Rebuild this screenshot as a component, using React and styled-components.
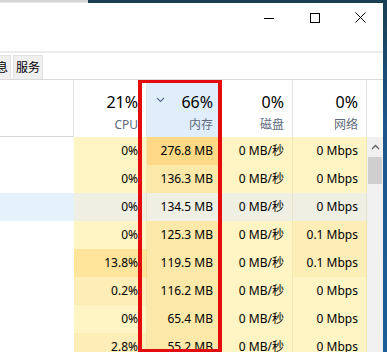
import React from 'react'
import styled, { createGlobalStyle } from 'styled-components'

const GlobalStyle = createGlobalStyle`
  html, body {
    margin: 0;
    padding: 0;
  }
  body {
    font-family: "Noto Sans", "Noto Sans CJK SC", sans-serif;
  }
`

// heat colours used by task manager cells
const heat = {
    0: '#fff4c4',
    1: '#fdedb7',
    2: '#fce8a8',
    3: '#ffe49c',
    4: '#ffd985',
}

const columns = [
    { key: 'cpu', percent: '21%', label: 'CPU' },
    { key: 'mem', percent: '66%', label: '内存', sorted: true },
    { key: 'disk', percent: '0%', label: '磁盘' },
    { key: 'net', percent: '0%', label: '网络' },
]

const rows = [
    [['0%', 0], ['276.8 MB', 4], ['0 MB/秒', 0], ['0 Mbps', 0]],
    [['0%', 0], ['136.3 MB', 2], ['0 MB/秒', 0], ['0 Mbps', 0]],
    [['0%', 0], ['134.5 MB', 2], ['0 MB/秒', 0], ['0 Mbps', 0]],
    [['0%', 0], ['125.3 MB', 2], ['0 MB/秒', 0], ['0.1 Mbps', 1]],
    [['13.8%', 3], ['119.5 MB', 2], ['0 MB/秒', 0], ['0.1 Mbps', 1]],
    [['0.2%', 1], ['116.2 MB', 2], ['0 MB/秒', 0], ['0 Mbps', 0]],
    [['0%', 0], ['65.4 MB', 2], ['0 MB/秒', 0], ['0 Mbps', 0]],
    [['2.8%', 1], ['55.2 MB', 2], ['0 MB/秒', 0], ['0 Mbps', 0]],
]

const SELECTED_ROW = 2

function MinimizeIcon() {
    return (
        <svg width="10" height="10" viewBox="0 0 10 10">
            <line x1="0" y1="5.5" x2="10" y2="5.5" stroke="#000" strokeWidth="1" />
        </svg>
    )
}

function MaximizeIcon() {
    return (
        <svg width="10" height="10" viewBox="0 0 10 10">
            <rect x="0.5" y="0.5" width="9" height="9" fill="none" stroke="#000" strokeWidth="1" />
        </svg>
    )
}

function CloseIcon() {
    return (
        <svg width="11" height="11" viewBox="0 0 11 11">
            <path d="M0.5 0.5 L10.5 10.5 M10.5 0.5 L0.5 10.5" stroke="#000" strokeWidth="1" />
        </svg>
    )
}

function SortChevron() {
    return (
        <svg width="9" height="6" viewBox="0 0 9 6">
            <polyline points="1,1 4.5,4.5 8,1" fill="none" stroke="#5b6f8c" strokeWidth="1.1" />
        </svg>
    )
}

function UpArrow() {
    return (
        <svg width="9" height="6" viewBox="0 0 9 6">
            <polyline points="1,5 4.5,1.5 8,5" fill="none" stroke="#606060" strokeWidth="1.3" />
        </svg>
    )
}

function App() {
    return (
        <Desktop>
            <GlobalStyle />
            <TopEdge>
                <OtherWindow />
            </TopEdge>
            <Window>
                <TitleBar>
                    <ControlButton><MinimizeIcon /></ControlButton>
                    <ControlButton><MaximizeIcon /></ControlButton>
                    <ControlButton narrow><CloseIcon /></ControlButton>
                </TitleBar>
                <TabStrip>
                    <Tab>详细信息</Tab>
                    <Tab>服务</Tab>
                </TabStrip>
                <Table>
                    <NameHeader />
                    {columns.map(col => (
                        <HeaderCell key={col.key} sorted={col.sorted}>
                            <HeaderTop>
                                {col.sorted ? <ChevronWrap><SortChevron /></ChevronWrap> : <span />}
                                <Percent>{col.percent}</Percent>
                            </HeaderTop>
                            <HeaderLabel>{col.label}</HeaderLabel>
                        </HeaderCell>
                    ))}
                    <ScrollHeader />
                    {rows.map((row, i) => (
                        <React.Fragment key={i}>
                            <NameCell selected={i === SELECTED_ROW} />
                            {row.map(([text, level], j) => (
                                <DataCell
                                    key={j}
                                    bg={i === SELECTED_ROW ? '#f0efe3' : heat[level]}
                                >
                                    {text}
                                </DataCell>
                            ))}
                        </React.Fragment>
                    ))}
                    <Scrollbar>
                        <ScrollButton><UpArrow /></ScrollButton>
                        <Thumb />
                    </Scrollbar>
                </Table>
            </Window>
            <Highlight />
        </Desktop>
    )
}

export default App

const Desktop = styled.div`
    position: relative;
    width: 387px;
    height: 352px;
    overflow: hidden;
    display: flex;
    flex-direction: column;
    background: linear-gradient(180deg, #1a3f52 0%, #1c568a 35%, #1b5d97 100%);
`

const TopEdge = styled.div`
    height: 3px;
    display: flex;
    flex-shrink: 0;
`

const OtherWindow = styled.div`
    width: 88px;
    background: #d4d4d4;
    border-bottom: 1px solid #e8e8e8;
`

const Window = styled.div`
    width: 383px;
    flex: 1;
    background: #fff;
    display: flex;
    flex-direction: column;
    overflow: hidden;
`

const TitleBar = styled.div`
    height: 48px;
    display: flex;
    justify-content: flex-end;
    align-items: flex-start;
    border-bottom: 2px solid #ececec;
    flex-shrink: 0;
`

const ControlButton = styled.div`
    width: ${props => props.narrow ? '45px' : '46px'};
    height: 29px;
    display: flex;
    align-items: center;
    justify-content: center;
`

const TabStrip = styled.div`
    height: 24px;
    padding-top: 2px;
    margin-left: -43px;
    display: flex;
    gap: 2px;
    border-bottom: 1px solid #d9d9d9;
    flex-shrink: 0;
`

const Tab = styled.div`
    padding: 0 2px;
    background: #f0f0f0;
    border: 1px solid #e1e1e1;
    border-bottom: none;
    font-size: 12px;
    line-height: 23px;
    color: #000;
    white-space: nowrap;
`

const Table = styled.div`
    display: grid;
    grid-template-columns: 74px 73px 75px 71px 74px 16px;
    grid-template-rows: 57px repeat(8, 28px);
`

const NameHeader = styled.div`
    border-right: 1px solid #e5e5e5;
    border-bottom: 1px solid #d6d6d6;
`

const HeaderCell = styled.div`
    display: flex;
    flex-direction: column;
    padding: 10px 8px 0 9px;
    background: ${props => props.sorted ? '#e0eefc' : '#fff'};
    border-right: 1px solid #e5e5e5;
`

const HeaderTop = styled.div`
    display: flex;
    justify-content: space-between;
    align-items: flex-start;
    height: 24px;
`

const ChevronWrap = styled.span`
    display: flex;
    margin-top: 7px;
`

const Percent = styled.span`
    font-size: 16px;
    line-height: 24px;
    color: #000;
`

const HeaderLabel = styled.div`
    margin-top: 3px;
    font-size: 12px;
    line-height: 16px;
    color: #5e6a7c;
    text-align: right;
`

const ScrollHeader = styled.div`
    background: #fff;
`

const NameCell = styled.div`
    background: ${props => props.selected ? '#e5f1fb' : '#fff'};
`

const DataCell = styled.div`
    background: ${props => props.bg};
    border-right: 1px solid rgba(190, 160, 70, 0.14);
    padding-right: 8px;
    font-size: 12px;
    line-height: 28px;
    color: #000;
    text-align: right;
    white-space: nowrap;
`

const Scrollbar = styled.div`
    grid-column: 6;
    grid-row: 2 / span 8;
    background: #f0f0f0;
    display: flex;
    flex-direction: column;
    align-items: center;
`

const ScrollButton = styled.div`
    height: 20px;
    width: 100%;
    display: flex;
    align-items: center;
    justify-content: center;
`

const Thumb = styled.div`
    width: 14px;
    height: 27px;
    background: #cfcfcf;
`

const Highlight = styled.div`
    position: absolute;
    left: 138px;
    top: 80px;
    width: 76px;
    height: 266px;
    border: solid #e30b0b;
    border-width: 3px 4px;
    pointer-events: none;
`
